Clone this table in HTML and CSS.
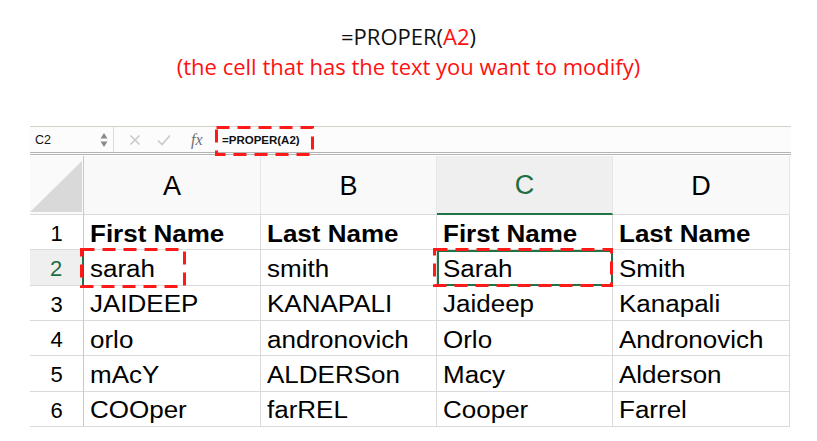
FILE: index.html
```html
<!DOCTYPE html>
<html>
<head>
<meta charset="utf-8">
<link rel="stylesheet" href="styles.css">
</head>
<body>
<div class="title">
  <div class="l1">=PROPER(<span class="red">A2</span>)</div>
  <div class="l2">(the cell that has the text you want to modify)</div>
</div>
<div class="sheet">
  <div class="fbar">
    <div class="namebox">
      <span class="ref">C2</span>
      <svg class="stepper" width="8" height="16" viewBox="0 0 8 16"><path d="M4 1 L7.5 6.5 H0.5 Z M4 15 L7.5 9.5 H0.5 Z" fill="#8a8a8a"/></svg>
    </div>
    <div class="tools">
      <svg width="12" height="12" viewBox="0 0 12 12"><path d="M1.5 1.5 L10.5 10.5 M10.5 1.5 L1.5 10.5" stroke="#c9c9c9" stroke-width="1.6" fill="none"/></svg>
      <svg width="14" height="12" viewBox="0 0 14 12"><path d="M1 6.5 L5 10.5 L13 1.5" stroke="#c9c9c9" stroke-width="1.6" fill="none"/></svg>
      <span class="fx">fx</span>
    </div>
    <div class="formula">=PROPER(A2)</div>
  </div>
  <div class="grid">
    <div class="corner"><svg width="52" height="51" viewBox="0 0 52 51"><polygon points="0,51 52,0 52,51" fill="#d9d9d9"/></svg></div>
    <div class="ch">A</div>
    <div class="ch">B</div>
    <div class="ch sel">C</div>
    <div class="ch">D</div>

    <div class="rh">1</div>
    <div class="c b"><span class="t">First Name</span></div>
    <div class="c b"><span class="t">Last Name</span></div>
    <div class="c b"><span class="t">First Name</span></div>
    <div class="c b"><span class="t">Last Name</span></div>

    <div class="rh sel">2</div>
    <div class="c"><span class="t">sarah</span></div>
    <div class="c"><span class="t">smith</span></div>
    <div class="c active"><span class="t">Sarah</span></div>
    <div class="c"><span class="t">Smith</span></div>

    <div class="rh">3</div>
    <div class="c"><span class="t">JAIDEEP</span></div>
    <div class="c"><span class="t">KANAPALI</span></div>
    <div class="c"><span class="t">Jaideep</span></div>
    <div class="c"><span class="t">Kanapali</span></div>

    <div class="rh">4</div>
    <div class="c"><span class="t">orlo</span></div>
    <div class="c"><span class="t">andronovich</span></div>
    <div class="c"><span class="t">Orlo</span></div>
    <div class="c"><span class="t">Andronovich</span></div>

    <div class="rh">5</div>
    <div class="c"><span class="t">mAcY</span></div>
    <div class="c"><span class="t">ALDERSon</span></div>
    <div class="c"><span class="t">Macy</span></div>
    <div class="c"><span class="t">Alderson</span></div>

    <div class="rh">6</div>
    <div class="c"><span class="t">COOper</span></div>
    <div class="c"><span class="t">farREL</span></div>
    <div class="c"><span class="t">Cooper</span></div>
    <div class="c"><span class="t">Farrel</span></div>
  </div>
  <svg class="marks" width="761" height="310" viewBox="0 0 761 310">
    <rect x="186.5" y="1.5" width="96" height="27" fill="none" stroke="#ff1a1a" stroke-width="3" stroke-dasharray="13 8"/>
    <rect x="51.5" y="123.5" width="103" height="37" fill="none" stroke="#ff1a1a" stroke-width="3" stroke-dasharray="13 8"/>
    <rect x="404.5" y="123.5" width="177" height="36" fill="none" stroke="#ff1a1a" stroke-width="3" stroke-dasharray="13 8"/>
  </svg>
</div>
</body>
</html>
```
FILE: styles.css
```css
html, body {
  margin: 0;
  padding: 0;
  background: #fff;
}
body {
  font-family: "Liberation Sans", Arial, sans-serif;
  color: #000;
}
.title {
  height: 126px;
  box-sizing: border-box;
  padding-top: 21px;
  text-align: center;
  font-family: "Open Sans", sans-serif;
  font-size: 22px;
  line-height: 30px;
}
.title .l1 { color: #111; }
.title .l2, .title .red { color: #ff1010; }

.sheet {
  position: relative;
  margin-left: 30px;
  width: 761px;
}
.fbar {
  display: flex;
  align-items: center;
  height: 29px;
  box-sizing: border-box;
  border-top: 1px solid #d6d1c6;
  border-bottom: 3px double #b4b4b4;
  background: #fcfcfc;
}
.namebox {
  width: 84px;
  height: 100%;
  box-sizing: border-box;
  border-right: 1px solid #dcdcdc;
  display: flex;
  align-items: center;
  justify-content: space-between;
  padding: 0 5px 0 5px;
}
.ref {
  font-size: 12.5px;
  color: #111;
}
.tools {
  display: flex;
  align-items: center;
  gap: 16px;
  padding-left: 15px;
  width: 86px;
}
.fx {
  font-family: "Liberation Serif", serif;
  font-style: italic;
  font-size: 16px;
  color: #6e6e6e;
  margin-left: 4px;
}
.formula {
  padding-left: 7px;
  font-size: 11.5px;
  font-weight: bold;
  color: #111;
}

.grid {
  margin-top: 1px;
  display: grid;
  grid-template-columns: 54px 177px 176px 176px 177px;
  grid-template-rows: 59px repeat(6, 35.33px);
}
.grid > div {
  box-sizing: border-box;
  border-right: 1px solid #dadada;
  border-bottom: 1px solid #dadada;
}
.corner {
  background: #fafafa;
  display: flex;
  align-items: flex-end;
  padding-bottom: 2px;
  border-right-color: #c8c8c8 !important;
}
.ch {
  background: #f9f9f9;
  border-right-color: #e6e6e6 !important;
  display: flex;
  align-items: center;
  justify-content: center;
  font-size: 27px;
  padding-top: 2px;
}
.ch.sel {
  background: #efefef;
  color: #1f6e43;
  border-bottom: 2px solid #217346 !important;
}
.rh {
  display: flex;
  align-items: center;
  justify-content: center;
  font-size: 22px;
  border-right-color: #c8c8c8 !important;
  padding-top: 4px;
}
.rh.sel {
  background: #efefef;
  color: #1f6e43;
  border-right: 2px solid #217346 !important;
}
.c {
  display: flex;
  align-items: center;
  padding-left: 6px;
  padding-top: 4px;
  font-size: 23px;
  white-space: nowrap;
}
.c.b { font-weight: bold; }
.c.active {
  outline: 2px solid #217346;
  outline-offset: -2px;
}
.t {
  display: inline-block;
  transform: scaleX(1.13);
  transform-origin: left center;
}
.marks {
  position: absolute;
  left: 0;
  top: 0;
  pointer-events: none;
}
```
